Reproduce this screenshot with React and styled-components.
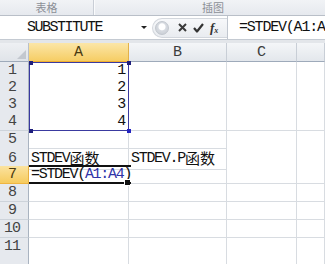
import React from "react";
import styled, { createGlobalStyle } from "styled-components";

const Global = createGlobalStyle`
  html, body { margin: 0; padding: 0; background: #fff; overflow: hidden; }
  #root { width: 325px; height: 264px; overflow: hidden; }
`;

const MONO = `"Liberation Mono", "Noto Sans CJK SC", monospace`;
const COLS = "29px 100px 98px 70px 1fr";

const Page = styled.div`
  display: flex;
  flex-direction: column;
  width: 325px;
  height: 264px;
  overflow: hidden;
  font-family: ${MONO};
`;

const Ribbon = styled.div`
  display: flex;
  flex: none;
  height: 16px;
  box-sizing: border-box;
  background: linear-gradient(#f1f3f6, #e6e9ee);
  border-bottom: 1px solid #b9bfc8;
`;

const Group = styled.div`
  width: ${(p) => p.$w}px;
  flex: none;
  display: flex;
  align-items: center;
  justify-content: center;
  font-family: "Noto Sans CJK SC", sans-serif;
  font-size: 11px;
  line-height: 13px;
  color: #8c9097;
  border-right: ${(p) => (p.$sep ? "1px solid #c9ced6" : "none")};
  box-shadow: ${(p) => (p.$sep ? "1px 0 0 #fafbfc" : "none")};
`;

const FormulaBar = styled.div`
  display: flex;
  flex: none;
  align-items: center;
  height: 23px;
  background: #fff;
  border-bottom: 1px solid #c4cad2;
`;

const NameBox = styled.div`
  width: 152px;
  flex: none;
  height: 100%;
  display: flex;
  align-items: center;
  box-sizing: border-box;
  padding-left: 27px;
  font-size: 15px;
  letter-spacing: -1.5px;
  color: #111;
  position: relative;
`;

const Caret = styled.span`
  position: absolute;
  left: 141px;
  top: 10px;
  width: 0;
  height: 0;
  border-left: 3px solid transparent;
  border-right: 3px solid transparent;
  border-top: 3px solid #222;
`;

const Buttons = styled.div`
  width: 75px;
  flex: none;
  height: 20px;
  display: flex;
  align-items: center;
  border-radius: 10px 0 0 10px;
  background: linear-gradient(#f7f8fa, #e9ecf0);
  border: 1px solid #d3d7dd;
  border-right: none;
  box-sizing: border-box;
`;

const Knob = styled.span`
  width: 14px;
  height: 14px;
  margin-left: 2px;
  border-radius: 50%;
  background: radial-gradient(circle at 50% 40%, #ffffff 0 3px, #d7dbe1 4px, #c6cbd2 100%);
  border: 1px solid #c2c7ce;
  box-sizing: border-box;
`;

const Icon = styled.svg`
  display: block;
  margin-left: ${(p) => p.$ml}px;
`;

const Fx = styled.span`
  margin-left: 6px;
  font-family: "Liberation Serif", serif;
  font-style: italic;
  font-weight: bold;
  font-size: 13px;
  color: #333;
  line-height: 1;
  letter-spacing: 0;
  & > sub {
    font-size: 8px;
    vertical-align: baseline;
    position: relative;
    top: 1px;
  }
`;

const Divider = styled.div`
  width: 1px;
  flex: none;
  height: 100%;
  background: #c0c6cf;
`;

const Input = styled.div`
  flex: 1;
  padding-left: 11px;
  font-size: 15px;
  letter-spacing: -1.2px;
  color: #111;
  white-space: nowrap;
  overflow: hidden;
`;

const Band = styled.div`
  flex: none;
  height: 3px;
  background: #e3e6ea;
`;

const Grid = styled.div`
  position: relative;
  flex: 1;
  min-height: 0;
  overflow: hidden;
`;

const HeadRow = styled.div`
  display: grid;
  grid-template-columns: ${COLS};
  height: 19px;
`;

const Corner = styled.div`
  position: relative;
  background: linear-gradient(#eef0f3, #e0e4e9);
  border-right: 1px solid #b9c0ca;
  border-bottom: 1px solid #9eaaba;
  box-sizing: border-box;
  &::after {
    content: "";
    position: absolute;
    right: 2px;
    bottom: 2px;
    border-left: 9px solid transparent;
    border-bottom: 9px solid #c3c8cf;
  }
`;

const ColHead = styled.div`
  display: flex;
  align-items: center;
  justify-content: center;
  box-sizing: border-box;
  font-size: 15px;
  color: ${(p) => (p.$sel ? "#4a3a10" : "#3c3c3c")};
  background: ${(p) =>
    p.$sel ? "linear-gradient(#fbe6a8, #f6cd64)" : "linear-gradient(#f4f6f8, #e3e7ec)"};
  border-right: 1px solid ${(p) => (p.$sel ? "#e2b14a" : "#c8ced6")};
  border-bottom: 1px solid ${(p) => (p.$sel ? "#f0b030" : "#9eaaba")};
`;

const Row = styled.div`
  display: grid;
  grid-template-columns: ${COLS};
  height: ${(p) => p.$h}px;
`;

const RowHead = styled.div`
  display: flex;
  align-items: center;
  justify-content: center;
  padding-right: 4px;
  box-sizing: border-box;
  font-size: 15px;
  letter-spacing: -1px;
  color: ${(p) => (p.$sel ? "#4a3a10" : "#444")};
  background: ${(p) => (p.$sel ? "linear-gradient(#fbe3a0, #f6cb5e)" : "#e6e9ee")};
  border-right: 1px solid ${(p) => (p.$sel ? "#e8b040" : "#a9b3c0")};
  border-bottom: 1px solid ${(p) => (p.$sel ? "#efb540" : "#cdd3da")};
`;

const Cell = styled.div`
  display: flex;
  align-items: center;
  justify-content: ${(p) => (p.$right ? "flex-end" : "flex-start")};
  padding: ${(p) => (p.$right ? "0 3px 0 0" : "0 0 0 2px")};
  box-sizing: border-box;
  font-size: 15px;
  letter-spacing: -1.3px;
  color: #111;
  white-space: nowrap;
  overflow: visible;
  border-right: 1px solid #d8dce1;
  border-bottom: 1px solid #d8dce1;
  position: relative;
  z-index: ${(p) => (p.$over ? 2 : 1)};
  background: ${(p) => (p.$over ? "transparent" : "#fff")};
`;

const Han = styled.span`
  font-family: "Noto Sans CJK SC", sans-serif;
  font-size: 15px;
  letter-spacing: 0;
  position: relative;
  top: -1px;
`;

const Ref = styled.span`
  color: #2f33a8;
`;

const TextCursor = styled.span`
  display: inline-block;
  width: 1px;
  height: 15px;
  background: #000;
  margin-left: 2px;
`;

const RangeBox = styled.div`
  position: absolute;
  left: 29px;
  top: 19px;
  width: 100px;
  height: 69px;
  box-sizing: border-box;
  border: 1px solid #3a3aa0;
  z-index: 3;
  pointer-events: none;
`;

const Handle = styled.span`
  position: absolute;
  width: 4px;
  height: 4px;
  background: ${(p) => p.$c || "#1e1e7c"};
  ${(p) => (p.$top ? "top: -2px;" : "bottom: -3px;")}
  ${(p) => (p.$left ? "left: -1px;" : "right: -3px;")}
`;

const ActiveBox = styled.div`
  position: absolute;
  left: 29px;
  top: 122px;
  width: 102px;
  height: 19px;
  box-sizing: border-box;
  border-top: 2px solid #111;
  border-bottom: 2px solid #111;
  z-index: 3;
  pointer-events: none;
`;

const FillHandle = styled.span`
  position: absolute;
  right: 1px;
  bottom: -4px;
  width: 5px;
  height: 5px;
  background: #111;
  border: 1px solid #fff;
  border-right: none;
`;

const heights = [17, 17, 17, 18, 17, 18, 18, 18, 18, 18, 17, 17];

const values = { 1: "1", 2: "2", 3: "3", 4: "4" };

export default function App() {
  return (
    <Page>
      <Global />
      <Ribbon>
        <Group $w={93} $sep>表格</Group>
        <Group $w={238}>插图</Group>
      </Ribbon>
      <FormulaBar>
        <NameBox>
          SUBSTITUTE
          <Caret />
        </NameBox>
        <Buttons>
          <Knob />
          <Icon $ml={9} width="9" height="9" viewBox="0 0 9 9">
            <path d="M1 1 L8 8 M8 1 L1 8" stroke="#3a3a3a" strokeWidth="2" fill="none" />
          </Icon>
          <Icon $ml={6} width="11" height="10" viewBox="0 0 11 10">
            <path d="M1 5 L4 8.5 L10 1" stroke="#333" strokeWidth="2.2" fill="none" strokeLinejoin="round" />
          </Icon>
          <Fx>
            f<sub>x</sub>
          </Fx>
        </Buttons>
        <Divider />
        <Input>=STDEV(A1:A4)</Input>
      </FormulaBar>
      <Band />
      <Grid>
        <HeadRow>
          <Corner />
          <ColHead $sel>A</ColHead>
          <ColHead>B</ColHead>
          <ColHead>C</ColHead>
          <ColHead />
        </HeadRow>
        {heights.map((h, i) => {
          const n = i + 1;
          let a = null;
          let b = null;
          if (values[n]) a = <Cell $right>{values[n]}</Cell>;
          if (n === 6) {
            a = (
              <Cell $over>
                STDEV<Han>函数</Han>
              </Cell>
            );
            b = (
              <Cell $over>
                STDEV.P<Han>函数</Han>
              </Cell>
            );
          }
          if (n === 7) {
            a = (
              <Cell $over>
                =STDEV(<Ref>A1:A4</Ref>)<TextCursor />
              </Cell>
            );
          }
          return (
            <Row key={n} $h={h}>
              <RowHead $sel={n === 7}>{n <= 11 ? n : ""}</RowHead>
              {a || <Cell />}
              {b || <Cell />}
              <Cell />
              <Cell />
            </Row>
          );
        })}
        <RangeBox>
          <Handle $top $left />
          <Handle $top />
          <Handle $left />
          <Handle $c="#2424c0" />
        </RangeBox>
        <ActiveBox>
          <FillHandle />
        </ActiveBox>
      </Grid>
    </Page>
  );
}
